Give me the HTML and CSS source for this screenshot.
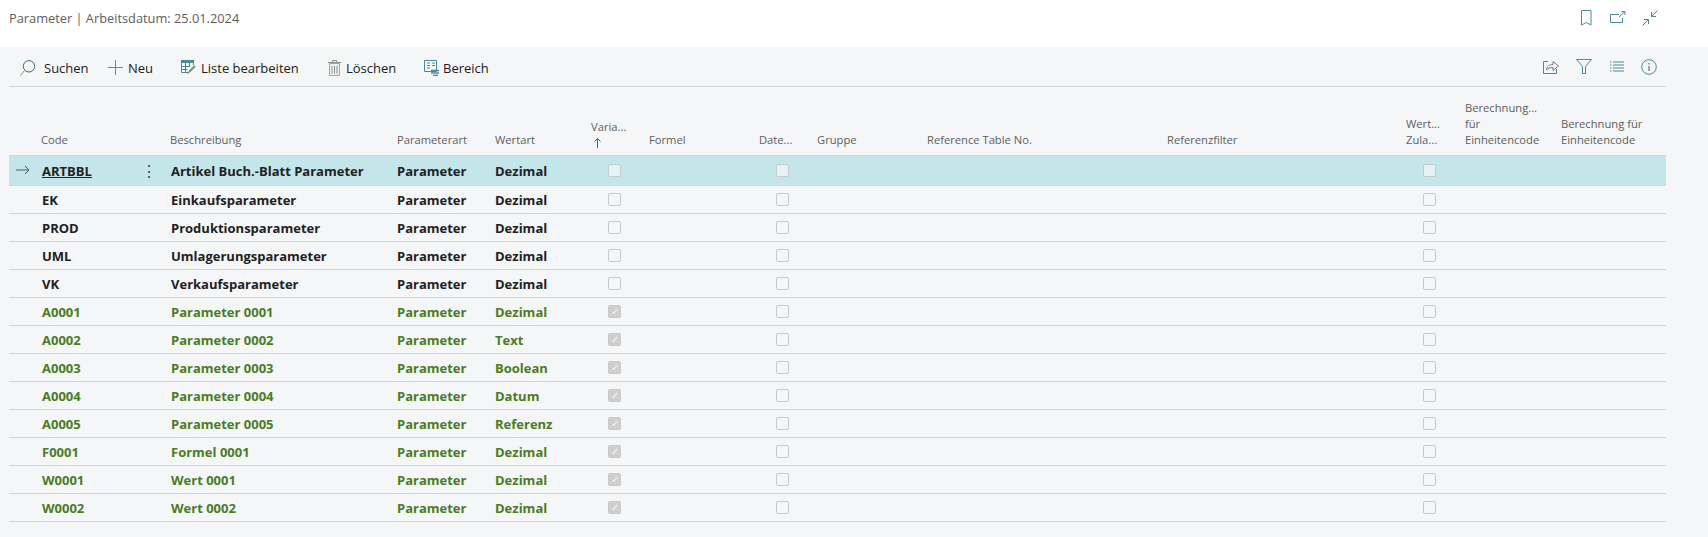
FILE: index.html
```html
<!DOCTYPE html>
<html lang="de">
<head>
    <meta charset="UTF-8">
    <title>Parameter</title>
    <link rel="stylesheet" href="styles.css">
</head>
<body>
    <header class="title-bar">
        <div class="page-title">Parameter | Arbeitsdatum: 25.01.2024</div>
        <div class="title-icons">
            <svg class="icon" width="13" height="16" viewBox="0 0 13 16"><path d="M0.500 0.500h9.500v14.500l-4.750-2.500-4.750 2.500z"/></svg>
            <svg class="icon" width="16" height="16" viewBox="0 0 16 16"><path d="M9 4.500H0.500v8h12V8M9 7l6-5.500M11.500 1.500h3.500V5"/></svg>
            <svg class="icon" width="16" height="16" viewBox="0 0 16 16"><path d="M15.500 0.500l-6 6M9.500 2v4.500H14M0.500 15.500l6-6M2 9.500h4.500V14"/></svg>
        </div>
    </header>
    <main class="content">
        <div class="toolbar">
            <div class="actions">
                <button class="action btn-search"><svg class="icon icon-dark" width="18" height="18" viewBox="0 0 18 18"><circle cx="9" cy="7.300" r="5.700"/><path d="M4.500 11.500L0.500 16.500" stroke="#a08a60"/></svg>Suchen</button>
                <button class="action btn-new"><svg class="icon icon-grey" width="15" height="15" viewBox="0 0 15 15"><path d="M7.500 0v15M0 7.500h15"/></svg>Neu</button>
                <button class="action btn-edit"><svg width="16" height="15" viewBox="0 0 16 15"><path fill="#4b8a94" d="M0 0h13v3H0z"/><path fill="none" stroke="#4b8a94" d="M0.500 3v9.500h7M4.500 3v9.500M8.500 3v4M0.500 6.500h8M0.500 9.500h6M12.500 3v2"/><path fill="none" stroke="#6f8f80" stroke-width="2" d="M8 12l6-6"/><path fill="none" stroke="#a08a60" d="M6.500 14l1.500-2"/></svg>Liste bearbeiten</button>
                <button class="action btn-delete"><svg width="13" height="16" viewBox="0 0 13 16"><path fill="#eef1f3" stroke="#a9a49a" d="M1.500 3.500h10v12h-10z"/><path fill="none" stroke="#8f8f88" d="M0 2.500h13M4.500 2.500v-2h4v2M4 6v7.500M6.500 6v7.500M9 6v7.500"/></svg>Löschen</button>
                <button class="action btn-area"><svg width="16" height="16" viewBox="0 0 16 16"><path fill="none" stroke="#4b8a94" d="M0.500 0.500h12v11h-12zM3 3h3M3 5.500h3M3 8h3M8 3h3M8 5.500h3"/><path fill="none" stroke="#4b8a94" stroke-width="1.500" d="M7 10.500h8M7 13h8M9 15.500h5"/></svg>Bereich</button>
            </div>
            <div class="tool-icons">
                <svg class="icon" width="16" height="16" viewBox="0 0 16 16"><path d="M5 2.500H0.500v12h13V10"/><path stroke="#7a7488" d="M3.500 11c0-3.500 3-5.500 6.500-5.500V2.500l5.500 4.500-5.500 4.500V8.500c-3 0-5 0.500-6.500 2.500z"/></svg>
                <svg class="icon" width="16" height="15" viewBox="0 0 16 15"><path d="M0.500 0.500h15l-6 7v7h-3v-7z"/></svg>
                <svg class="icon" width="15" height="11" viewBox="0 0 15 11"><path d="M1 1h1.500M4 1h11M1 4h1.500M4 4h11M1 7h1.500M4 7h11M1 10h1.500M4 10h11"/></svg>
                <svg class="icon" width="16" height="16" viewBox="0 0 16 16"><circle cx="8" cy="8" r="7.300"/><path stroke="#555" d="M8 7v5M8 4v1.500"/></svg>
            </div>
        </div>
        <table class="grid">
            <colgroup>
                <col class="c-arrow"><col class="c-code"><col class="c-menu"><col class="c-desc"><col class="c-kind"><col class="c-type"><col class="c-var"><col class="c-formula"><col class="c-date"><col class="c-group"><col class="c-ref"><col class="c-filter"><col class="c-value"><col class="c-calc1"><col class="c-calc2">
            </colgroup>
            <thead>
                <tr>
                    <th></th><th class="th-code">Code</th><th></th><th>Beschreibung</th><th>Parameterart</th><th>Wertart</th>
                    <th>Varia...<br><svg class="sort" width="7" height="10" viewBox="0 0 7 10"><path d="M3.500 10V1M0.500 3.500l3-3 3 3"/></svg></th><th>Formel</th><th>Date...</th><th>Gruppe</th><th>Reference Table No.</th><th>Referenzfilter</th>
                    <th>Wert...<br>Zula...</th><th>Berechnung...<br>für<br>Einheitencode</th><th>Berechnung für<br>Einheitencode</th>
                </tr>
            </thead>
            <tbody>
                <tr class="selected">
                    <td class="arrow"><svg width="14" height="10" viewBox="0 0 14 10"><path d="M0 5h13M9 1l4 4-4 4"/></svg></td><td><a class="code-link">ARTBBL</a></td><td class="dots">⋮</td><td class="desc">Artikel Buch.-Blatt Parameter</td><td>Parameter</td><td>Dezimal</td>
                    <td><span class="check"></span></td><td></td><td><span class="check"></span></td><td></td><td></td><td></td><td><span class="check"></span></td><td></td><td></td>
                </tr>
                <tr>
                    <td></td><td>EK</td><td></td><td class="desc">Einkaufsparameter</td><td>Parameter</td><td>Dezimal</td>
                    <td><span class="check"></span></td><td></td><td><span class="check"></span></td><td></td><td></td><td></td><td><span class="check"></span></td><td></td><td></td>
                </tr>
                <tr>
                    <td></td><td>PROD</td><td></td><td class="desc">Produktionsparameter</td><td>Parameter</td><td>Dezimal</td>
                    <td><span class="check"></span></td><td></td><td><span class="check"></span></td><td></td><td></td><td></td><td><span class="check"></span></td><td></td><td></td>
                </tr>
                <tr>
                    <td></td><td>UML</td><td></td><td class="desc">Umlagerungsparameter</td><td>Parameter</td><td>Dezimal</td>
                    <td><span class="check"></span></td><td></td><td><span class="check"></span></td><td></td><td></td><td></td><td><span class="check"></span></td><td></td><td></td>
                </tr>
                <tr>
                    <td></td><td>VK</td><td></td><td class="desc">Verkaufsparameter</td><td>Parameter</td><td>Dezimal</td>
                    <td><span class="check"></span></td><td></td><td><span class="check"></span></td><td></td><td></td><td></td><td><span class="check"></span></td><td></td><td></td>
                </tr>
                <tr class="green">
                    <td></td><td>A0001</td><td></td><td class="desc">Parameter 0001</td><td>Parameter</td><td>Dezimal</td>
                    <td><span class="check on">✓</span></td><td></td><td><span class="check"></span></td><td></td><td></td><td></td><td><span class="check"></span></td><td></td><td></td>
                </tr>
                <tr class="green">
                    <td></td><td>A0002</td><td></td><td class="desc">Parameter 0002</td><td>Parameter</td><td>Text</td>
                    <td><span class="check on">✓</span></td><td></td><td><span class="check"></span></td><td></td><td></td><td></td><td><span class="check"></span></td><td></td><td></td>
                </tr>
                <tr class="green">
                    <td></td><td>A0003</td><td></td><td class="desc">Parameter 0003</td><td>Parameter</td><td>Boolean</td>
                    <td><span class="check on">✓</span></td><td></td><td><span class="check"></span></td><td></td><td></td><td></td><td><span class="check"></span></td><td></td><td></td>
                </tr>
                <tr class="green">
                    <td></td><td>A0004</td><td></td><td class="desc">Parameter 0004</td><td>Parameter</td><td>Datum</td>
                    <td><span class="check on">✓</span></td><td></td><td><span class="check"></span></td><td></td><td></td><td></td><td><span class="check"></span></td><td></td><td></td>
                </tr>
                <tr class="green">
                    <td></td><td>A0005</td><td></td><td class="desc">Parameter 0005</td><td>Parameter</td><td>Referenz</td>
                    <td><span class="check on">✓</span></td><td></td><td><span class="check"></span></td><td></td><td></td><td></td><td><span class="check"></span></td><td></td><td></td>
                </tr>
                <tr class="green">
                    <td></td><td>F0001</td><td></td><td class="desc">Formel 0001</td><td>Parameter</td><td>Dezimal</td>
                    <td><span class="check on">✓</span></td><td></td><td><span class="check"></span></td><td></td><td></td><td></td><td><span class="check"></span></td><td></td><td></td>
                </tr>
                <tr class="green">
                    <td></td><td>W0001</td><td></td><td class="desc">Wert 0001</td><td>Parameter</td><td>Dezimal</td>
                    <td><span class="check on">✓</span></td><td></td><td><span class="check"></span></td><td></td><td></td><td></td><td><span class="check"></span></td><td></td><td></td>
                </tr>
                <tr class="green">
                    <td></td><td>W0002</td><td></td><td class="desc">Wert 0002</td><td>Parameter</td><td>Dezimal</td>
                    <td><span class="check on">✓</span></td><td></td><td><span class="check"></span></td><td></td><td></td><td></td><td><span class="check"></span></td><td></td><td></td>
                </tr>
            </tbody>
        </table>
    </main>
</body>
</html>
```

FILE: styles.css
```css
body {
    margin: 0;
    height: 537px;
    overflow: hidden;
    font-family: "Open Sans", "Noto Sans", sans-serif;
    background-color: #f5f6f8;
    color: #212121;
}
.icon {
    fill: none;
    stroke: #4b8a94;
    stroke-width: 1;
}
.icon-dark {
    stroke: #3d6a74;
}
.icon-grey {
    stroke: #6a8a92;
}
.title-bar {
    height: 47px;
    background: white;
    display: flex;
    justify-content: space-between;
    padding: 8px 50px 0 9px;
    box-sizing: border-box;
}
.page-title {
    font-size: 12.800px;
    line-height: 20px;
    color: #605e5c;
}
.title-icons {
    display: flex;
    align-items: flex-start;
    gap: 16px;
    padding-top: 2px;
}
.content {
    padding: 0 42px 0 9px;
}
.toolbar {
    height: 40px;
    border-bottom: 1px solid #d3d5d6;
    display: flex;
    justify-content: space-between;
    align-items: center;
    box-sizing: border-box;
}
.actions {
    display: flex;
    padding: 2px 0 0 11px;
}
.action {
    display: flex;
    align-items: center;
    gap: 4px;
    border: none;
    background: none;
    padding: 0;
    font: inherit;
    font-size: 13px;
    color: #212121;
}
.btn-search { width: 88px; gap: 6px; }
.btn-new { width: 73px; gap: 5px; }
.btn-edit { width: 147px; }
.btn-delete { width: 96px; gap: 5px; }
.btn-area { gap: 3px; }
.tool-icons {
    display: flex;
    align-items: center;
    gap: 17px;
    padding-right: 9px;
}
.grid {
    width: 1657px;
    table-layout: fixed;
    border-collapse: collapse;
    font-size: 13px;
}
.c-arrow { width: 28px; }
.c-code { width: 96px; }
.c-menu { width: 32px; }
.c-desc { width: 227px; }
.c-kind { width: 98px; }
.c-type { width: 96px; }
.c-var { width: 58px; }
.c-formula { width: 110px; }
.c-date { width: 58px; }
.c-group { width: 110px; }
.c-ref { width: 240px; }
.c-filter { width: 239px; }
.c-value { width: 59px; }
.c-calc1 { width: 96px; }
.c-calc2 { width: 110px; }
th {
    height: 68px;
    box-sizing: border-box;
    padding: 0 0 7px 5px;
    vertical-align: bottom;
    text-align: left;
    font-size: 11.200px;
    font-weight: 400;
    line-height: 16px;
    color: #605e5c;
    white-space: nowrap;
    border-bottom: 1px solid #d3d5d6;
}
.th-code {
    padding-left: 4px;
}
td {
    height: 28px;
    box-sizing: border-box;
    padding: 2px 0 0 5px;
    font-weight: 700;
    white-space: nowrap;
    border-bottom: 1px solid #d3d5d6;
}
td.desc {
    padding-left: 6px;
}
.selected td {
    height: 30px;
    background-color: #c4e6eb;
}
.green td {
    color: #4a7c23;
}
.arrow svg {
    display: block;
    margin: -2px 0 0 2px;
    fill: none;
    stroke: #555;
}
.code-link {
    text-decoration: underline;
}
td.dots {
    padding-left: 8px;
    font-size: 16px;
    font-weight: 400;
    color: #444;
}
.sort {
    display: block;
    margin: 3px 0 0 3px;
    fill: none;
    stroke: #605e5c;
}
.check {
    display: block;
    width: 13px;
    height: 13px;
    margin: -2px 0 0 17px;
    box-sizing: border-box;
    border: 1px solid #c8c8c8;
    border-radius: 2px;
    background: #f5f6f8;
    font-size: 10px;
    font-weight: 400;
    line-height: 11px;
    text-align: center;
    color: #f5f6f8;
}
.selected .check {
    background: #e6f3f5;
}
.check.on {
    background: #cfcfcf;
}
```
